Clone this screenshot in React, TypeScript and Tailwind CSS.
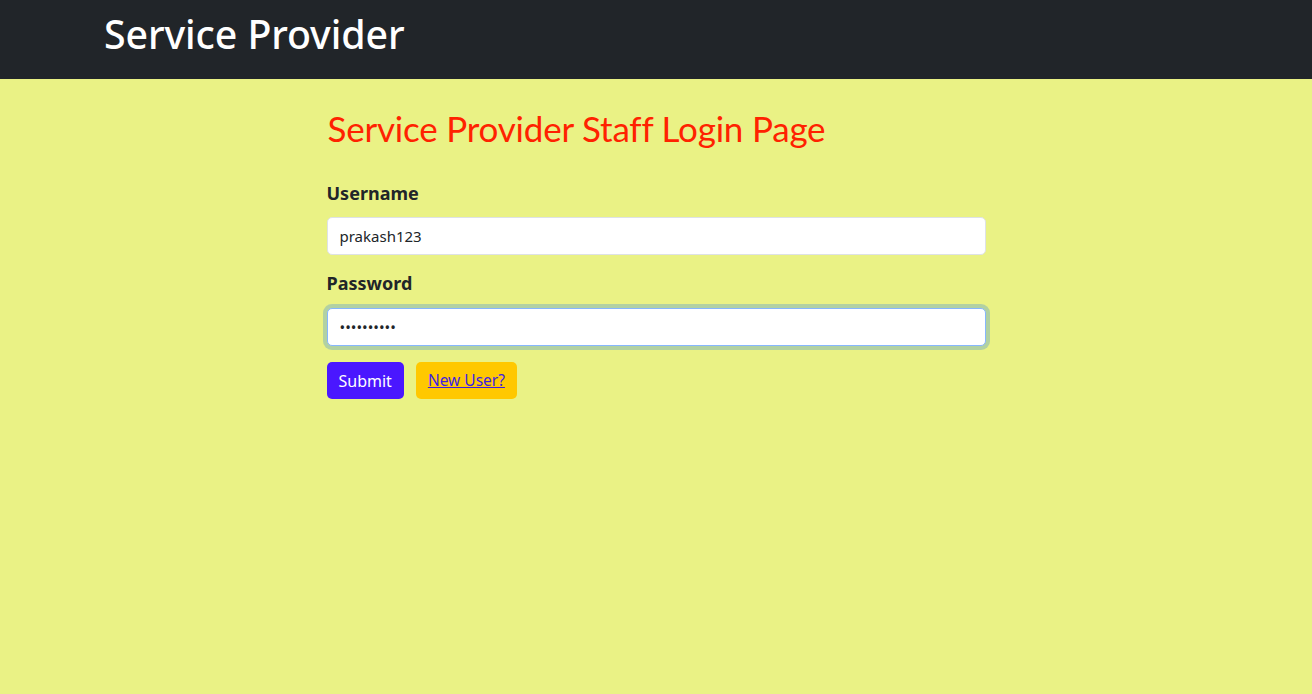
import React, { useState } from 'react';

export default function App() {
  const [username, setUsername] = useState('prakash123');
  const [password, setPassword] = useState('prakash123');

  return (
    <div className="min-h-[694px] bg-[#eaf285] font-['Noto_Sans',sans-serif]">
      <nav className="h-[79px] bg-[#212529] flex items-center">
        <div className="w-[1140px] mx-auto px-3">
          <a href="#" className="block pl-[6px] text-[39.3px] leading-none text-white font-medium tracking-[-0.1px] pb-[10px]">
            Service Provider
          </a>
        </div>
      </nav>

      <div className="w-[659px] mx-auto pt-[28px]">
        <h2 className="font-['Lato',sans-serif] text-[35px] leading-[1.2] tracking-[-0.2px] text-[#ff2200] mb-[34px] pl-[1px]">
          Service Provider Staff Login Page
        </h2>

        <form onSubmit={(e) => e.preventDefault()}>
          <label className="block text-[18px] font-bold text-[#212529] leading-[1.2] mb-[12px]">
            Username
          </label>
          <input
            type="text"
            className="block w-full h-[38px] px-3 text-[15px] text-[#212529] bg-white border border-[#dee2e6] rounded-[5px] outline-none"
            value={username}
            onChange={(e) => setUsername(e.target.value)}
          />

          <label className="block text-[18px] font-bold text-[#212529] leading-[1.2] mt-[18px] mb-[14px]">
            Password
          </label>
          <input
            type="password"
            className="block w-full h-[38px] px-3 text-[15px] text-[#212529] bg-white border border-[#86b7fe] rounded-[5px] outline-none shadow-[0_0_0_4px_rgba(13,110,253,0.25)]"
            value={password}
            onChange={(e) => setPassword(e.target.value)}
          />

          <div className="flex gap-3 mt-[16px]">
            <button
              type="submit"
              className="h-[37px] px-3 bg-[#4a17ff] text-white text-[16px] rounded-[5px]"
            >
              Submit
            </button>
            <a
              href="#"
              className="h-[37px] px-3 flex items-center bg-[#ffc800] text-[#3f1fe0] underline text-[15.5px] rounded-[5px]"
            >
              New User?
            </a>
          </div>
        </form>
      </div>
    </div>
  );
}
